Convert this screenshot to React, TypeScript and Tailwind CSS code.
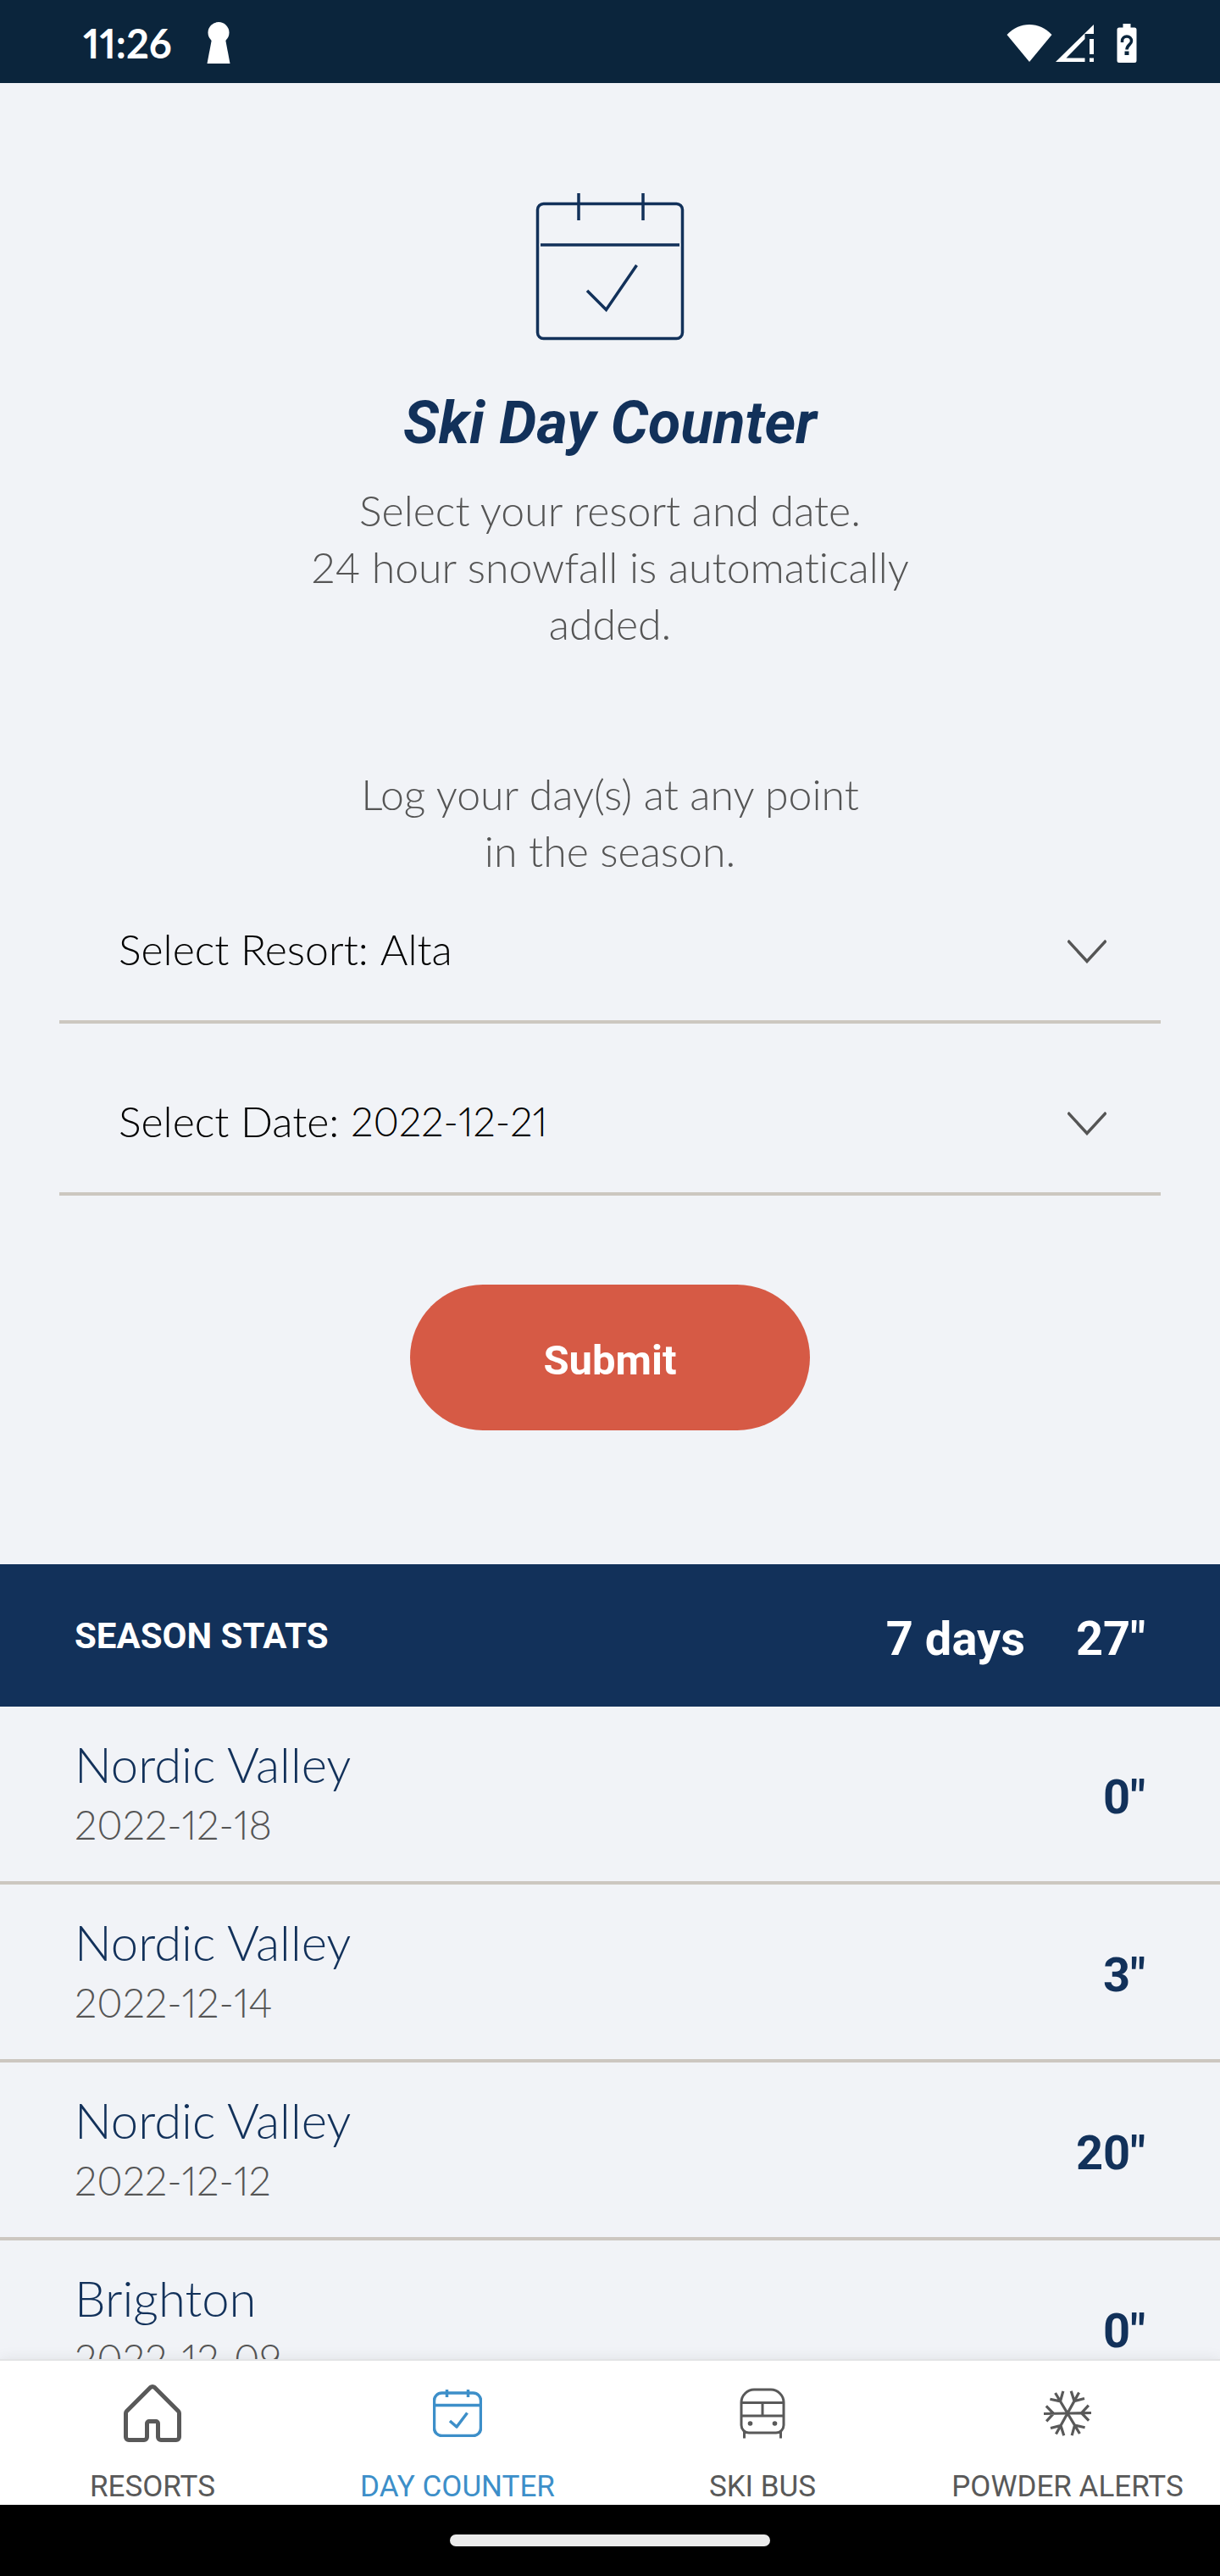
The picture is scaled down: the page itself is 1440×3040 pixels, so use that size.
import React, { useState } from 'react'
import clsx from 'clsx'

const resorts = ['Alta', 'Brighton', 'Nordic Valley']
const dates = ['2022-12-21', '2022-12-20', '2022-12-19']

const skiDays = [
  { resort: 'Nordic Valley', date: '2022-12-18', snow: 0 },
  { resort: 'Nordic Valley', date: '2022-12-14', snow: 3 },
  { resort: 'Nordic Valley', date: '2022-12-12', snow: 20 },
  { resort: 'Brighton', date: '2022-12-09', snow: 0 },
]

function StatusBar() {
  return (
    <header className="flex h-[98px] shrink-0 items-center bg-[#0b253c] px-[98px] pt-1 text-white">
      <span className="w-[146px] font-['Lato',sans-serif] text-[47px] leading-[56px] font-bold proportional-nums">11:26</span>
      <svg className="h-[50px] w-7" viewBox="0 0 28 50" fill="currentColor" aria-hidden="true">
        <circle cx="14" cy="12.500" r="12.500" />
        <path d="M6 20h16l5.500 29H.5z" />
      </svg>
      <div className="ml-auto flex items-center">
        <svg className="h-[46px] w-[54px]" viewBox="0 0 54 46" fill="currentColor" aria-hidden="true">
          <path d="M.5 13C8 5 17 1 27 1s19 4 26.500 12L27 45z" />
        </svg>
        <svg className="ml-1 h-[46px] w-[46px]" viewBox="0 0 46 46" fill="currentColor" aria-hidden="true">
          <path fillRule="evenodd" d="M0 45L45 1v11H34.500v6L12.500 40.500h22V45z" />
          <path d="M40 18h5v18h-5zM40 40.500h5V45h-5z" />
        </svg>
        <svg className="ml-[26px] h-[46px] w-6" viewBox="0 0 24 46" aria-hidden="true">
          <path fill="currentColor" d="M7.500 0h9v4.500H21a2.500 2.500 0 0 1 2.500 2.500v36.500A2.500 2.500 0 0 1 21 46H3a2.500 2.500 0 0 1-2.500-2.500V7A2.500 2.500 0 0 1 3 4.500h4.500z" />
          <path fill="none" stroke="#0b253c" strokeWidth="3.500" d="M6.500 22v-1.500a5.500 5.500 0 1 1 11 0c0 4-5.500 4.500-5.500 10" />
          <path fill="#0b253c" d="M9.500 32.500h5v4.500h-5z" />
        </svg>
      </div>
    </header>
  )
}

function BigCalendar() {
  return (
    <svg className="h-[174px] w-[176px]" viewBox="0 0 176 174" fill="none" stroke="#12315a" strokeWidth="3.500" aria-hidden="true">
      <rect x="2.500" y="12.500" width="171" height="159" rx="7" />
      <path d="M51 0v32M127 0v32M6 61h164" />
      <path d="M61 115l22.500 22.500L119.500 85" />
    </svg>
  )
}

function Chevron() {
  return (
    <svg className="mt-1 h-7 w-[46px]" viewBox="0 0 46 28" fill="none" stroke="#555" strokeWidth="3.500" aria-hidden="true">
      <path d="M.5 1L23 25.500 45.500 1" />
    </svg>
  )
}

type FieldProps = {
  id: string
  label: string
  value: string
  options: string[]
  onChange: (value: string) => void
  className?: string
}

function SelectField({ id, label, value, options, onChange, className }: FieldProps) {
  return (
    <div className="flex items-center border-b-4 border-[#ccc7c0] pl-[70px] pr-16 pb-[50px] font-['Lato',sans-serif] text-[50px] leading-[67px] font-light proportional-nums text-black">
      <label htmlFor={id}>{label}</label>
      <select
        id={id}
        value={value}
        onChange={(e) => onChange(e.target.value)}
        className={clsx('ml-[14px] h-[67px] flex-1 appearance-none bg-transparent outline-none', className)}
      >
        {options.map((option) => (
          <option key={option}>{option}</option>
        ))}
      </select>
      <Chevron />
    </div>
  )
}

function HomeIcon() {
  return (
    <svg className="h-[68px] w-[70px]" viewBox="0 0 70 68" fill="none" stroke="currentColor" strokeWidth="5" strokeLinejoin="round" aria-hidden="true">
      <path d="M35 2.500c-1 0-1.800.4-2.500 1L4.500 31.500c-.6.600-1 1.400-1 2.500v28a3.500 3.500 0 0 0 3.500 3.500h18a3.500 3.500 0 0 0 3.500-3.500V46a2.500 2.500 0 0 1 2.500-2.500h8a2.500 2.500 0 0 1 2.500 2.500v16a3.500 3.500 0 0 0 3.500 3.500h18a3.500 3.500 0 0 0 3.500-3.500V34c0-1.100-.4-1.900-1-2.500l-28-28c-.7-.6-1.500-1-2.500-1z" />
    </svg>
  )
}

function CalendarIcon() {
  return (
    <svg className="h-[56px] w-[58px]" viewBox="0 0 58 56" fill="none" stroke="currentColor" strokeWidth="3.500" aria-hidden="true">
      <rect x="1.500" y="4" width="55" height="50.500" rx="9" />
      <path d="M16.500 0v9M41.500 0v9M2 18.500h54" />
      <path d="M20 37l8 7L40.500 27.500" strokeLinejoin="round" />
    </svg>
  )
}

function BusIcon() {
  return (
    <svg className="h-[60px] w-[54px]" viewBox="0 0 54 60" fill="none" stroke="currentColor" strokeWidth="3" aria-hidden="true">
      <path d="M17 2h20c8 0 15 7 15 15v27c0 5-4 9-9 9H11c-5 0-9-4-9-9V17C2 9 9 2 17 2z" />
      <path d="M2 17.500h50M2 33h50M27 17.500V33M5.500 51v8.500M48.500 51v8.500" />
      <circle cx="12.500" cy="42" r="2.800" fill="currentColor" stroke="none" />
      <circle cx="41.500" cy="42" r="2.800" fill="currentColor" stroke="none" />
    </svg>
  )
}

function SnowIcon() {
  return (
    <svg className="h-[56px] w-[56px]" viewBox="0 0 56 56" fill="none" stroke="currentColor" strokeWidth="3.200" aria-hidden="true">
      {[0, 60, 120, 180, 240, 300].map((angle) => (
        <path key={angle} transform={`rotate(${angle - 1} 28 28)`} d="M28 28h28M53 19l-8.500 9 8.500 9" />
      ))}
    </svg>
  )
}

const tabs = [
  { label: 'RESORTS', icon: HomeIcon },
  { label: 'DAY COUNTER', icon: CalendarIcon, active: true },
  { label: 'SKI BUS', icon: BusIcon },
  { label: 'POWDER ALERTS', icon: SnowIcon },
]

function TabBar() {
  return (
    <nav className="relative grid h-[172px] shrink-0 grid-cols-4 border-t-2 border-[#e2e3e5] bg-white shadow-[0_0_16px_rgba(0,0,0,0.08)]">
      {tabs.map(({ label, icon: Icon, active }) => (
        <a
          key={label}
          href="#"
          aria-current={active ? 'page' : undefined}
          className={clsx('flex flex-col items-center gap-1', active ? 'text-[#3d8fc9]' : 'text-[#595959]')}
        >
          <span className="flex h-[124px] items-center justify-center">
            <Icon />
          </span>
          <span className="text-[35px] leading-[42px] whitespace-nowrap">{label}</span>
        </a>
      ))}
    </nav>
  )
}

export default function App() {
  const [resort, setResort] = useState('Alta')
  const [date, setDate] = useState('2022-12-21')

  return (
    <div className="flex h-screen flex-col bg-[#f1f3f7] font-['Roboto',sans-serif] [font-variant-ligatures:none]">
      <StatusBar />

      <main className="min-h-0 flex-1 overflow-y-auto [scrollbar-width:none]">
        <section className="flex flex-col items-center pt-[130px] text-center">
          <BigCalendar />
          <h1 className="mt-14 text-[70px] leading-[82px] font-bold italic text-[#12315a]">Ski Day Counter</h1>
          <div className="mt-[29px] max-w-[760px] font-['Lato',sans-serif] text-[50px] leading-[67px] font-light text-[#555]">
            <p>
              Select your resort and date.
              <br />
              24 hour snowfall is automatically added.
            </p>
            <p className="mt-[134px]">
              Log your day(s) at any point
              <br />
              in the season.
            </p>
          </div>
        </section>

        <form className="px-[70px] pt-[49px]" onSubmit={(e) => e.preventDefault()}>
          <SelectField id="resort" label="Select Resort:" value={resort} options={resorts} onChange={setResort} />
          <div className="h-[82px]" />
          <SelectField id="date" label="Select Date:" value={date} options={dates} onChange={setDate} className="text-[47px]" />
          <button
            type="submit"
            className="mx-auto mt-[105px] block h-[172px] w-[472px] rounded-full bg-[#d65a45] pt-2 text-[49px] font-bold text-white"
          >
            Submit
          </button>
        </form>

        <section className="mt-[158px]">
          <div className="flex h-[168px] items-center bg-[#12315a] px-[88px] font-bold text-white">
            <h2 className="flex-1 text-[42px]">SEASON STATS</h2>
            <span className="pt-2 text-[56px]">7 days</span>
            <span className="ml-[60px] pt-2 text-[56px]">27"</span>
          </div>
          <ul>
            {skiDays.map((day) => (
              <li key={day.date} className="flex h-[210px] items-center justify-between border-b-4 border-[#ccc7c0] px-[88px]">
                <div className="pb-1 font-['Lato',sans-serif] font-light proportional-nums">
                  <p className="text-[58px] leading-[76px] text-[#12315a]">{day.resort}</p>
                  <p className="text-[47px] leading-[67px] text-[#555]">{day.date}</p>
                </div>
                <span className="pt-2 text-[56px] font-bold text-[#12315a]">{day.snow}"</span>
              </li>
            ))}
          </ul>
        </section>
      </main>

      <TabBar />

      <footer className="flex h-[84px] shrink-0 items-center justify-center bg-black">
        <div className="h-[14px] w-[378px] rounded-full bg-[#ebebeb]" />
      </footer>
    </div>
  )
}
